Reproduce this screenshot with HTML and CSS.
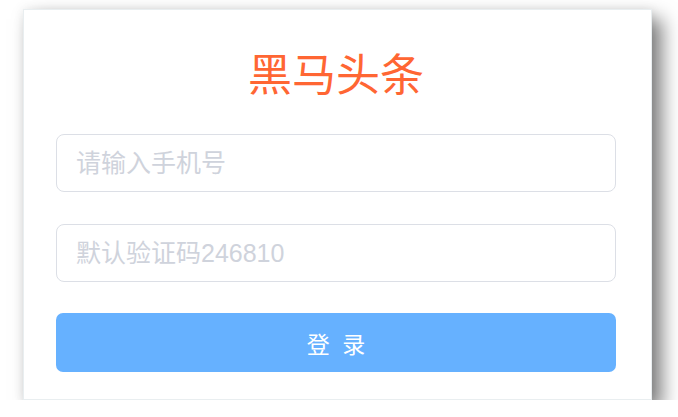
FILE: index.html
```html
<!DOCTYPE html>
<html lang="zh-CN">
<head>
<meta charset="utf-8">
<title>黑马头条</title>
<link rel="stylesheet" href="styles.css">
</head>
<body>
<div class="page">
  <form class="card">
    <h1 class="title">黑马头条</h1>
    <div class="field"><input class="input" type="text" placeholder="请输入手机号"></div>
    <div class="field"><input class="input" type="text" placeholder="默认验证码246810"></div>
    <button class="btn" type="button">登 录</button>
  </form>
</div>
</body>
</html>
```

FILE: styles.css
```css
html, body {
  margin: 0;
  padding: 0;
  background: #ffffff;
}
body {
  font-family: "Liberation Sans", "Noto Sans CJK SC", sans-serif;
}
.page {
  padding: 9px 0 0 23px;
}
.card {
  box-sizing: border-box;
  width: 629px;
  height: 391px;
  background: #fff;
  border: 1px solid #e9eef0;
  box-shadow: 10px 10px 18px rgba(0, 0, 0, 0.5), 0 0 10px rgba(0, 0, 0, 0.08);
  padding: 32px 35px 0 32px;
  display: flex;
  flex-direction: column;
}
.title {
  margin: 0 0 32px;
  height: 60px;
  line-height: 60px;
  text-align: center;
  font-family: "Noto Sans CJK SC", sans-serif;
  font-size: 44px;
  font-weight: 400;
  color: #ff6633;
}
.field {
  margin-bottom: 32px;
}
.input {
  box-sizing: border-box;
  display: block;
  width: 560px;
  height: 58px;
  border: 1px solid #dcdfe6;
  border-radius: 8px;
  padding: 0 19px;
  font-family: inherit;
  font-size: 25px;
  color: #606266;
  outline: none;
}
.input::placeholder {
  color: #cfd3dc;
}
.btn {
  display: block;
  width: 560px;
  height: 59px;
  margin-top: -1px;
  border: none;
  border-radius: 7px;
  background: #66b1ff;
  color: #fff;
  font-family: inherit;
  font-size: 23px;
  letter-spacing: 3px;
  text-indent: 3px;
  cursor: pointer;
}
```
